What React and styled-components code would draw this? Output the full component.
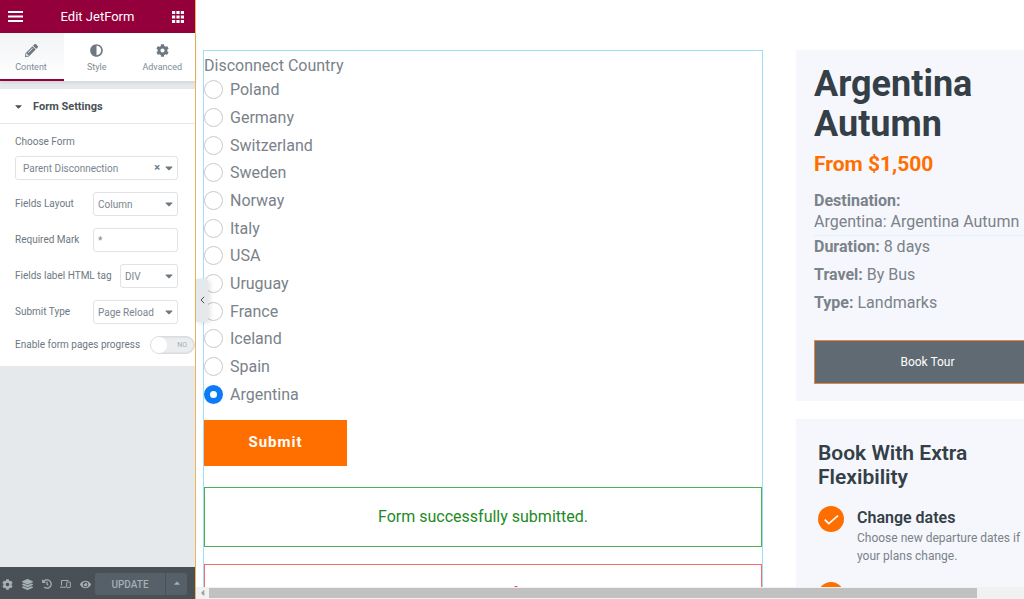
import React from 'react';
import styled, { createGlobalStyle, css } from 'styled-components';
import { FaPencilAlt, FaAdjust, FaCog, FaLayerGroup, FaHistory, FaEye, FaCaretDown, FaCaretUp, FaCaretLeft } from 'react-icons/fa';

const Global = createGlobalStyle`
  * { box-sizing: border-box; }
  body { margin: 0; background: #fff; font-family: Roboto, "Liberation Sans", sans-serif; }
  h1, h2, h3, p, fieldset, ul { margin: 0; padding: 0; border: 0; list-style: none; }
  button, input, select { font-family: inherit; margin: 0; }
`;

const Editor = styled.div`
  display: flex;
  height: 100vh;
  overflow: hidden;
`;

const Sidebar = styled.aside`
  flex: 0 0 196px;
  min-width: 0;
  display: flex;
  flex-direction: column;
  background: #e6e9ec;
  border-right: 1px solid #e8b45c;
`;

const PanelHeader = styled.header`
  display: flex;
  align-items: center;
  justify-content: space-between;
  height: 33px;
  flex: none;
  padding: 0 11px 0 8px;
  background: #93003c;
  color: #fff;
`;

const PanelTitle = styled.h1`
  font-size: 13px;
  font-weight: 400;
  line-height: 32px;
`;

const IconButton = styled.button`
  display: flex;
  padding: 0;
  border: 0;
  background: none;
  color: inherit;
`;

const Tabs = styled.nav`
  display: grid;
  grid-template-columns: 64px 1fr 1fr;
  height: 48px;
  flex: none;
  background: #fff;
  box-shadow: 0 1px 4px rgba(0, 0, 0, 0.12);
`;

const Tab = styled.button`
  display: flex;
  flex-direction: column;
  align-items: center;
  gap: 5px;
  padding: ${p => (p.$active ? '11px 2px 0 0' : '11px 0 0')};
  border: 0;
  border-bottom: 2px solid ${p => (p.$active ? '#93003c' : 'transparent')};
  background: ${p => (p.$active ? 'linear-gradient(#f1f3f5, #fff)' : 'none')};
  color: #6d7882;
  font-size: 9px;
  line-height: 11px;
  svg { width: 13px; height: 13px; }
  span { color: #808b94; }
`;

const Section = styled.section`
  margin-top: 8px;
  background: #fff;
`;

const SectionToggle = styled.button`
  display: flex;
  align-items: center;
  gap: 11px;
  width: 100%;
  height: 35px;
  padding: 0 15px;
  border: 0;
  border-bottom: 1px solid #e6e9ec;
  background: none;
  color: #495157;
  font-size: 11px;
  font-weight: 700;
  svg { width: 7px; }
`;

const Controls = styled.form`
  display: flex;
  flex-direction: column;
  gap: 12px;
  padding: 11px 17px 12px 15px;
  color: #6d7882;
  font-size: 10px;
`;

const Control = styled.div`
  display: flex;
  justify-content: space-between;
  align-items: center;
  white-space: nowrap;
  line-height: 14px;
  ${p => p.$stacked && css`
    flex-direction: column;
    align-items: stretch;
    gap: 7px;
  `}
`;

const fieldBox = css`
  width: 100%;
  height: 24px;
  padding: 0 4px;
  border: 1px solid #dfe3e7;
  border-radius: 3px;
  background: #fff;
  color: #7b858e;
  font-size: 10px;
  appearance: none;
  outline: 0;
`;

const SelectWrap = styled.div`
  display: grid;
  align-items: center;
  width: ${p => p.$width};
  > * { grid-area: 1 / 1; }
`;

const Select = styled.select`
  ${fieldBox}
  padding-left: ${p => (p.$indent ? '7px' : '4px')};
`;

const SelectMarks = styled.span`
  display: flex;
  align-items: center;
  gap: 5px;
  justify-self: end;
  padding-right: 5px;
  pointer-events: none;
  font-size: 11px;
  font-weight: 700;
  color: #6d7882;
  svg { width: 8px; height: 12px; }
`;

const TextInput = styled.input`
  ${fieldBox}
  width: 85px;
`;

const SwitchRow = styled(Control)`
  margin-right: -17px;
`;

const Switch = styled.span`
  display: grid;
  align-items: center;
  flex: 0 0 45px;
  > * { grid-area: 1 / 1; }
  span {
    justify-self: end;
    padding-right: 8px;
    font-size: 7px;
    color: #a4afb7;
    pointer-events: none;
  }
`;

const SwitchInput = styled.input`
  appearance: none;
  display: flex;
  width: 45px;
  height: 18px;
  border: 1px solid #d9dde0;
  border-radius: 9px;
  background: #ebedee;
  box-shadow: inset 0 0 2px rgba(0, 0, 0, 0.15);
  &::before {
    content: '';
    width: 16px;
    border-radius: 50%;
    background: #fff;
  }
`;

const PanelFooter = styled.footer`
  display: flex;
  align-items: center;
  height: 32px;
  flex: none;
  margin-top: auto;
  padding: 2px 8px 0 2px;
  background: #495157;
  color: #a4afb7;
`;

const Tools = styled.div`
  display: flex;
  flex: 1;
  justify-content: space-between;
  padding-right: 4px;
`;

const UpdateButton = styled.button`
  width: ${p => (p.$narrow ? '22px' : '70px')};
  height: 22px;
  padding: 0;
  border: 0;
  border-left: ${p => (p.$narrow ? '1px solid #495157' : '0')};
  border-radius: ${p => (p.$narrow ? '0 3px 3px 0' : '3px 0 0 3px')};
  background: #556068;
  color: #a4afb7;
  font-size: 10px;
  font-weight: 500;
  svg { width: 6px; }
`;

const Preview = styled.main`
  position: relative;
  display: flex;
  flex-direction: column;
  flex: 1;
  min-width: 0;
`;

const Canvas = styled.div`
  display: grid;
  grid-template-columns: minmax(560px, 2fr) minmax(262px, 1fr);
  gap: 33px;
  flex: 1;
  min-height: 0;
  overflow: hidden;
  padding: 50px 0 0 7px;
  color: #7a828a;
`;

const FormWidget = styled.form`
  align-self: start;
  padding-top: 5px;
  border: 1px solid #9fe0f5;
  font-size: 16px;
`;

const Legend = styled.legend`
  padding: 0;
  line-height: 20px;
`;

const Options = styled.div`
  display: grid;
  grid-auto-rows: 1fr;
  height: 332px;
`;

const Option = styled.label`
  display: flex;
  align-items: center;
  gap: 7px;
`;

const Radio = styled.input`
  appearance: none;
  width: 19px;
  height: 19px;
  border: 1px solid #c5cad0;
  border-radius: 50%;
  background: #fff;
  &:checked { border: 6px solid #0d7bf5; }
`;

const Submit = styled.button`
  display: block;
  width: 143px;
  height: 46px;
  margin-top: 12px;
  padding: 0 6px 2px;
  border: 0;
  background: #ff6f00;
  color: #fff;
  font-size: 15px;
  font-weight: 700;
  letter-spacing: 1px;
`;

const Message = styled.p`
  margin-top: ${p => (p.$error ? '17px' : '21px')};
  padding: 19px 12px;
  border: 1px solid ${p => (p.$error ? '#f96a70' : '#4fae55')};
  color: ${p => (p.$error ? '#f4433a' : '#1d8a25')};
  line-height: 20px;
  text-align: center;
`;

const Aside = styled.div`
  display: flex;
  flex-direction: column;
  gap: 18px;
`;

const Card = styled.section`
  flex: none;
  padding: ${p => p.$padding};
  background: #f6f7fc;
`;

const TourTitle = styled.h2`
  color: #343f47;
  font-size: 36px;
  font-weight: 700;
  line-height: 40px;
`;

const Price = styled.p`
  margin-top: 8px;
  color: #ff6f00;
  font-size: 21px;
  font-weight: 700;
  line-height: 24px;
`;

const Facts = styled.ul`
  margin-top: 14px;
  font-size: 16px;
  line-height: 21px;
`;

const Fact = styled.li`
  padding-bottom: 7px;
  white-space: nowrap;
  &:first-child {
    padding-bottom: 3px;
    border-bottom: 1px solid #dff1fb;
  }
  strong { font-weight: 700; }
`;

const BookButton = styled.button`
  display: block;
  width: 100%;
  height: 44px;
  margin-top: 20px;
  border: 1px solid #e8873a;
  background: #5f6a72;
  color: #fff;
  font-size: 12px;
`;

const PerksTitle = styled.h2`
  color: #343f47;
  font-size: 21px;
  font-weight: 600;
  line-height: 24px;
`;

const Perk = styled.article`
  display: flex;
  gap: 13px;
  margin-top: 17px;
  svg { flex: none; }
  h3 {
    color: #343f47;
    font-size: 16px;
    font-weight: 600;
    line-height: 23px;
  }
  p {
    font-size: 12px;
    line-height: 18px;
  }
`;

const Collapse = styled.button`
  position: absolute;
  left: 0;
  top: calc(50% - 21px);
  display: flex;
  align-items: center;
  justify-content: center;
  width: 12px;
  height: 43px;
  padding: 0;
  border: 0;
  border-radius: 0 3px 3px 0;
  background: #e6e9ec;
  box-shadow: 2px 1px 5px rgba(0, 0, 0, 0.12);
  color: #495157;
`;

const ScrollTrack = styled.div`
  display: flex;
  align-items: center;
  flex: none;
  height: 12px;
  background: #f1f1f1;
  color: #a3a3a3;
  svg { width: 13px; height: 10px; }
`;

const ScrollThumb = styled.div`
  flex: 1;
  height: 10px;
  margin-right: 47px;
  background: #c1c1c1;
`;

const countries = ['Poland', 'Germany', 'Switzerland', 'Sweden', 'Norway', 'Italy', 'USA', 'Uruguay', 'France', 'Iceland', 'Spain', 'Argentina'];

const MenuIcon = () => (
  <svg width="15" height="11" viewBox="0 0 15 11" fill="currentColor">
    <path d="M0 0h15v2H0zM0 4.5h15v2H0zM0 9h15v2H0z" />
  </svg>
);

const GridIcon = () => (
  <svg width="12" height="12" viewBox="0 0 12 12" fill="currentColor">
    <path d="M0 0h3.2v3H0zM4.4 0h3.2v3H4.4zM8.8 0H12v3H8.8zM0 4.5h3.2v3H0zM4.4 4.5h3.2v3H4.4zM8.8 4.5H12v3H8.8zM0 9h3.2v3H0zM4.4 9h3.2v3H4.4zM8.8 9H12v3H8.8z" />
  </svg>
);

const DevicesIcon = () => (
  <svg width="11" height="10" viewBox="0 0 11 10" fill="none" stroke="currentColor">
    <path d="M1.5 6.5v-5h7M0 8.2h6" />
    <rect x="6.7" y="3" width="3.6" height="5.6" rx=".5" />
  </svg>
);

const CheckBadge = () => (
  <svg width="26" height="26" viewBox="0 0 26 26">
    <circle cx="13" cy="13" r="13" fill="#ff6f00" />
    <path d="M6.8 13.6l4 4L20 9.6" fill="none" stroke="#fff" strokeWidth="1.6" />
  </svg>
);

const SelectField = ({ id, label, value, width, stacked, clearable }) => (
  <Control $stacked={stacked}>
    <label htmlFor={id}>{label}</label>
    <SelectWrap $width={width}>
      <Select id={id} $indent={stacked}><option>{value}</option></Select>
      <SelectMarks>{clearable && <span>×</span>}<FaCaretDown /></SelectMarks>
    </SelectWrap>
  </Control>
);

export default function App() {
  return (
    <Editor>
      <Global />
      <Sidebar>
        <PanelHeader>
          <IconButton aria-label="Menu"><MenuIcon /></IconButton>
          <PanelTitle>Edit JetForm</PanelTitle>
          <IconButton aria-label="Widgets"><GridIcon /></IconButton>
        </PanelHeader>
        <Tabs>
          <Tab $active><FaPencilAlt /><span>Content</span></Tab>
          <Tab><FaAdjust /><span>Style</span></Tab>
          <Tab><FaCog /><span>Advanced</span></Tab>
        </Tabs>
        <Section>
          <SectionToggle><FaCaretDown />Form Settings</SectionToggle>
          <Controls>
            <SelectField id="form" label="Choose Form" value="Parent Disconnection" width="100%" stacked clearable />
            <SelectField id="layout" label="Fields Layout" value="Column" width="85px" />
            <Control>
              <label htmlFor="mark">Required Mark</label>
              <TextInput id="mark" defaultValue="*" />
            </Control>
            <SelectField id="tag" label="Fields label HTML tag" value="DIV" width="58px" />
            <SelectField id="submit-type" label="Submit Type" value="Page Reload" width="85px" />
            <SwitchRow>
              <label htmlFor="progress">Enable form pages progress</label>
              <Switch><SwitchInput id="progress" type="checkbox" /><span>NO</span></Switch>
            </SwitchRow>
          </Controls>
        </Section>
        <PanelFooter>
          <Tools>
            <IconButton aria-label="Settings"><FaCog size={11} /></IconButton>
            <IconButton aria-label="Navigator"><FaLayerGroup size={11} /></IconButton>
            <IconButton aria-label="History"><FaHistory size={10} /></IconButton>
            <IconButton aria-label="Responsive mode"><DevicesIcon /></IconButton>
            <IconButton aria-label="Preview"><FaEye size={11} /></IconButton>
          </Tools>
          <UpdateButton>UPDATE</UpdateButton>
          <UpdateButton $narrow aria-label="Save options"><FaCaretUp /></UpdateButton>
        </PanelFooter>
      </Sidebar>

      <Preview>
        <Canvas>
          <FormWidget>
            <fieldset>
              <Legend>Disconnect Country</Legend>
              <Options>
                {countries.map(name => (
                  <Option key={name}>
                    <Radio type="radio" name="country" defaultChecked={name === 'Argentina'} />
                    {name}
                  </Option>
                ))}
              </Options>
            </fieldset>
            <Submit type="button">Submit</Submit>
            <Message>Form successfully submitted.</Message>
            <Message $error>There was an error trying to submit form. Please try again later.</Message>
          </FormWidget>
          <Aside>
            <Card $padding="14px 17px 17px 18px">
              <TourTitle>Argentina Autumn</TourTitle>
              <Price>From $1,500</Price>
              <Facts>
                <Fact><strong>Destination:</strong><br />Argentina: Argentina Autumn</Fact>
                <Fact><strong>Duration:</strong> 8 days</Fact>
                <Fact><strong>Travel:</strong> By Bus</Fact>
                <Fact><strong>Type:</strong> Landmarks</Fact>
              </Facts>
              <BookButton>Book Tour</BookButton>
            </Card>
            <Card $padding="22px">
              <PerksTitle>Book With Extra Flexibility</PerksTitle>
              <Perk>
                <CheckBadge />
                <div>
                  <h3>Change dates</h3>
                  <p>Choose new departure dates if your plans change.</p>
                </div>
              </Perk>
              <Perk>
                <CheckBadge />
              </Perk>
            </Card>
          </Aside>
        </Canvas>
        <ScrollTrack>
          <FaCaretLeft />
          <ScrollThumb />
        </ScrollTrack>
        <Collapse aria-label="Hide panel">
          <svg width="5" height="8" viewBox="0 0 5 8" fill="none" stroke="currentColor"><path d="M4.2.8L1 4l3.2 3.2" /></svg>
        </Collapse>
      </Preview>
    </Editor>
  );
}
